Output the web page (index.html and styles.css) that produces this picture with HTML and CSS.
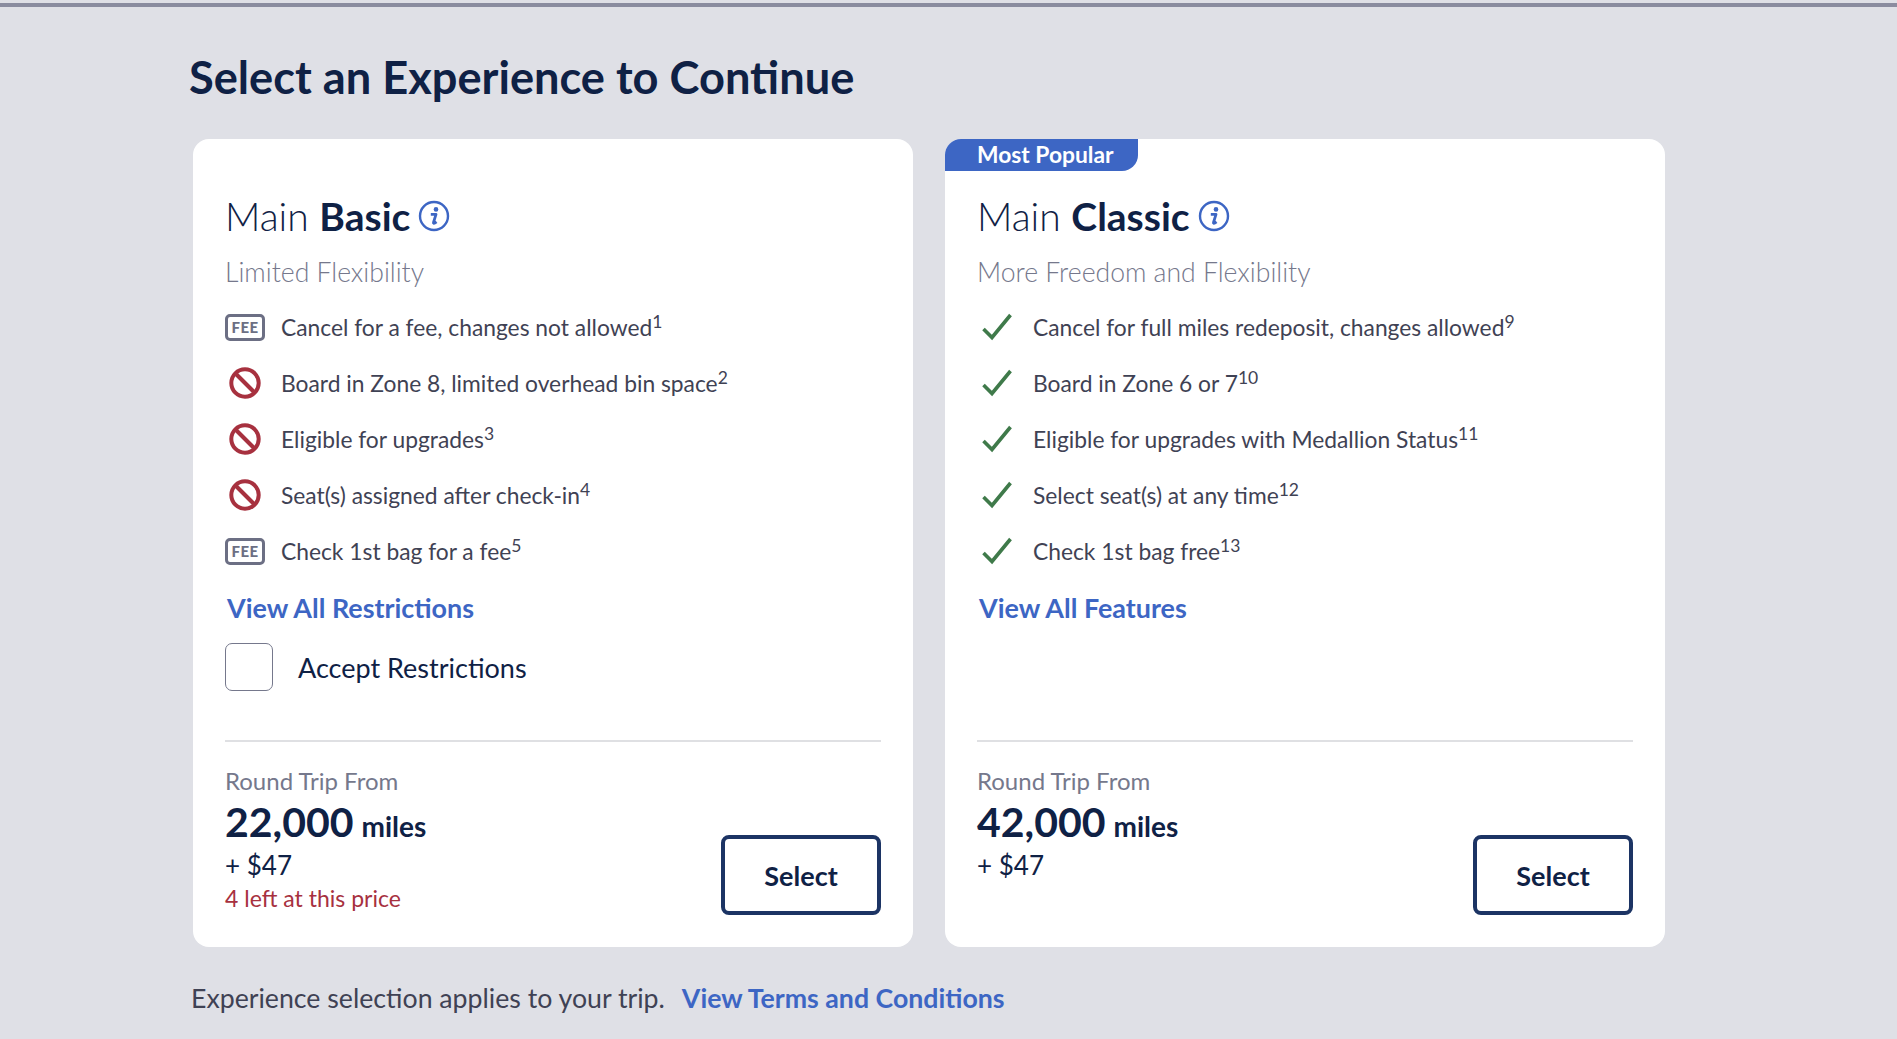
FILE: index.html
```html
<!DOCTYPE html>
<html lang="en">
<head>
<meta charset="utf-8">
<title>Select an Experience</title>
<link rel="stylesheet" href="styles.css">
</head>
<body>
<svg class="defs" width="0" height="0" aria-hidden="true">
  <symbol id="i-info" viewBox="0 0 32 32"><circle cx="16" cy="16" r="14" fill="none" stroke="#3d66c4" stroke-width="2.4"/><circle cx="18" cy="9.4" r="2.3" fill="#3d66c4"/><path d="M12.8 14.4h5.2l-2.5 8c-.3.9.5 1.1 1.2.7l1.9-1.3" fill="none" stroke="#3d66c4" stroke-width="2.8" stroke-linejoin="round"/></symbol>
  <symbol id="i-ban" viewBox="0 0 32 32"><circle cx="16" cy="16" r="13.7" fill="none" stroke="#a7313f" stroke-width="4"/><path d="M6.5 6.5l19 19" stroke="#a7313f" stroke-width="4"/></symbol>
  <symbol id="i-check" viewBox="0 0 32 32"><path d="M2.5 18l8.5 8.5L29.5 4" fill="none" stroke="#3f7a4a" stroke-width="3.6"/></symbol>
</svg>
<div class="topbar"></div>
<main class="page">
  <h1 class="heading">Select an Experience to Continue</h1>
  <div class="cards">
    <section class="card">
      <h2 class="title"><span>Main <b>Basic</b></span><svg class="info"><use href="#i-info"/></svg></h2>
      <p class="sub">Limited Flexibility</p>
      <ul class="list">
        <li><span class="ico"><span class="fee">FEE</span></span><span>Cancel for a fee, changes not allowed<sup>1</sup></span></li>
        <li><span class="ico"><svg class="ban"><use href="#i-ban"/></svg></span><span>Board in Zone 8, limited overhead bin space<sup>2</sup></span></li>
        <li><span class="ico"><svg class="ban"><use href="#i-ban"/></svg></span><span>Eligible for upgrades<sup>3</sup></span></li>
        <li><span class="ico"><svg class="ban"><use href="#i-ban"/></svg></span><span>Seat(s) assigned after check-in<sup>4</sup></span></li>
        <li><span class="ico"><span class="fee">FEE</span></span><span>Check 1st bag for a fee<sup>5</sup></span></li>
      </ul>
      <a class="link more">View All Restrictions</a>
      <label class="accept"><span class="box"></span><span>Accept Restrictions</span></label>
      <div class="foot">
        <div class="price">
          <div class="from">Round Trip From</div>
          <div class="miles"><strong>22,000</strong><span>miles</span></div>
          <div class="cash">+ $47</div>
          <div class="left">4 left at this price</div>
        </div>
        <button class="select">Select</button>
      </div>
    </section>
    <section class="card">
      <div class="badge">Most Popular</div>
      <h2 class="title"><span>Main <b>Classic</b></span><svg class="info"><use href="#i-info"/></svg></h2>
      <p class="sub">More Freedom and Flexibility</p>
      <ul class="list">
        <li><span class="ico"><svg class="check"><use href="#i-check"/></svg></span><span>Cancel for full miles redeposit, changes allowed<sup>9</sup></span></li>
        <li><span class="ico"><svg class="check"><use href="#i-check"/></svg></span><span>Board in Zone 6 or 7<sup>10</sup></span></li>
        <li><span class="ico"><svg class="check"><use href="#i-check"/></svg></span><span>Eligible for upgrades with Medallion Status<sup>11</sup></span></li>
        <li><span class="ico"><svg class="check"><use href="#i-check"/></svg></span><span>Select seat(s) at any time<sup>12</sup></span></li>
        <li><span class="ico"><svg class="check"><use href="#i-check"/></svg></span><span>Check 1st bag free<sup>13</sup></span></li>
      </ul>
      <a class="link more">View All Features</a>
      <div class="foot">
        <div class="price">
          <div class="from">Round Trip From</div>
          <div class="miles"><strong>42,000</strong><span>miles</span></div>
          <div class="cash">+ $47</div>
        </div>
        <button class="select">Select</button>
      </div>
    </section>
  </div>
  <p class="note">Experience selection applies to your trip.<a class="link terms">View Terms and Conditions</a></p>
</main>
</body>
</html>
```
FILE: styles.css
```css
* { box-sizing: border-box; }
html, body { margin: 0; height: 100%; overflow: hidden; }
body { background: #dfe0e6; font-family: Lato, "Open Sans", sans-serif; color: #0f2145; }
.defs { display: block; height: 0; }
.topbar { height: 4px; margin-top: 3px; background: #8a8c9f; }
.page { padding: 44px 0 0 189px; }
.heading { margin: 0 0 36px; font-size: 45.2px; line-height: 52px; font-weight: 700; }
.cards { display: flex; gap: 32px; margin-left: 4px; }
.card { flex: none; position: relative; display: flex; flex-direction: column; width: 720px; height: 808px; padding: 55px 32px 0; background: #fff; border-radius: 16px; }
.badge { position: absolute; left: 0; top: 0; width: 193px; height: 32px; padding-left: 32px; background: #3d66c4; color: #fff; font-size: 22.8px; font-weight: 700; line-height: 31px; border-radius: 16px 0 16px 0; }
.title { display: flex; align-items: center; gap: 8px; margin: 0; height: 44px; font-size: 39px; font-weight: 300; }
.title b { font-weight: 700; }
.info { width: 32px; height: 32px; }
.sub { margin: 16px 0 0; font-size: 26.6px; line-height: 36px; font-weight: 300; color: #75788c; }
.list { list-style: none; margin: 9px 0 0; padding: 0; }
.list li { display: flex; align-items: center; height: 56px; font-size: 22.8px; color: #3f4254; }
.list sup { font-size: 17.5px; line-height: 0; vertical-align: 8px; }
.ico { flex: none; display: flex; justify-content: center; align-items: center; width: 40px; margin-right: 16px; }
.fee { display: block; width: 40px; height: 27px; border: 3px solid #6c6f84; border-radius: 5px; font-size: 15px; line-height: 21px; font-weight: 900; text-align: center; color: #6c6f84; letter-spacing: .5px; }
.ban { width: 32px; height: 32px; }
.check { width: 32px; height: 32px; }
.link { color: #3d66c4; font-weight: 700; }
.more { display: block; margin: 13px 0 0 2px; font-size: 26.9px; line-height: 32px; }
.accept { display: flex; align-items: center; margin-top: 19px; font-size: 27px; color: #0f2145; }
.box { width: 48px; height: 48px; margin-right: 25px; background: #fff; border: 1.5px solid #75788c; border-radius: 7px; }
.foot { position: absolute; left: 32px; right: 32px; top: 601px; display: flex; justify-content: space-between; align-items: flex-start; border-top: 2px solid #dfe0e3; padding-top: 25px; }
.from { font-size: 24px; line-height: 28px; color: #75788c; }
.miles { display: flex; align-items: baseline; gap: 8px; margin-top: 5px; line-height: 44px; font-weight: 700; }
.miles strong { font-size: 41px; font-weight: 700; }
.miles span { font-size: 28px; font-weight: 700; }
.cash { font-size: 26px; line-height: 32px; margin-top: 1px; }
.left { font-size: 23px; line-height: 28px; margin-top: 3px; color: #a7313f; }
.select { flex: none; width: 160px; height: 80px; margin-top: 68px; background: #fff; border: 4px solid #1c3464; border-radius: 8px; font: 700 27px Lato, sans-serif; color: #0f2145; }
.note { margin: 35px 0 0 2px; font-size: 26.7px; line-height: 32px; color: #3f4254; }
.terms { margin-left: 17px; }
```
